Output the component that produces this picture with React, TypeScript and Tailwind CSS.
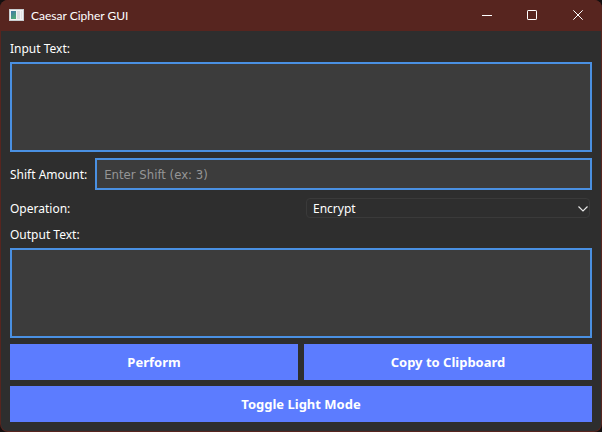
import React from "react";

const caption = "pt-0.5 leading-[14px]";
const field =
  "block w-full rounded-none border-2 border-[#4a90e2] bg-[#3c3c3c] font-['DejaVu_Sans_Condensed','DejaVu_Sans',sans-serif] text-[13px] text-white outline-none placeholder:text-[#969696] placeholder:opacity-100";
const action =
  "h-9 w-full bg-[#5c7cff] text-center font-['Noto_Sans',sans-serif] text-[13px] font-bold text-white hover:bg-[#4a6aef]";

function AppIcon() {
  return (
    <svg width="15" height="12" viewBox="0 0 15 12" aria-hidden="true" shapeRendering="crispEdges">
      <defs>
        <linearGradient id="screen" x1="0" y1="0" x2="0.5" y2="1">
          <stop offset="0" stopColor="#3f76a8" />
          <stop offset="1" stopColor="#4fa878" />
        </linearGradient>
      </defs>
      <rect width="15" height="12" fill="#c9cdd0" />
      <rect x="1" y="1" width="13" height="10" fill="#f2f2f2" />
      <rect x="2" y="2" width="5" height="8" fill="url(#screen)" />
      <rect x="8" y="2" width="3" height="8" fill="#dcdde0" />
      <rect x="12" y="2" width="1" height="8" fill="#e2e2e2" />
    </svg>
  );
}

function TitleBar() {
  const control = "flex h-full w-[46px] items-center justify-center hover:bg-white/10";
  return (
    <header className="flex h-[31px] items-center bg-[#57251f] pr-px pb-px pl-[9px] text-white">
      <AppIcon />
      <h1 className="ml-[7px] flex-1 pt-0.5 font-['Lato',sans-serif] text-[12px] leading-4">
        Caesar Cipher GUI
      </h1>
      <button type="button" aria-label="Minimize" className={control}>
        <svg width="12" height="10" viewBox="0 0 12 10" fill="none" stroke="currentColor">
          <path d="M2 5.5H12" />
        </svg>
      </button>
      <button type="button" aria-label="Maximize" className={control}>
        <svg width="10" height="10" viewBox="0 0 10 10" fill="none" stroke="currentColor">
          <rect x="0.5" y="0.5" width="9" height="9" rx="0.6" />
        </svg>
      </button>
      <button type="button" aria-label="Close" className={control}>
        <svg width="10" height="10" viewBox="0 0 10 10" fill="none" stroke="currentColor">
          <path d="M0.3 0.3L9.7 9.7M9.7 0.3L0.3 9.7" />
        </svg>
      </button>
    </header>
  );
}

export default function App() {
  return (
    <div className="flex min-h-screen bg-[#151010] font-['Noto_Sans',sans-serif] text-[12px] leading-4 text-white">
      <div className="flex flex-1 flex-col overflow-hidden rounded-lg bg-[#57251f]">
        <TitleBar />
        <main className="mx-px mb-px flex flex-1 flex-col gap-1.5 rounded-b-[7px] bg-[#2e2e2e] p-[9px]">
          <label htmlFor="input-text" className={caption}>
            Input Text:
          </label>
          <textarea id="input-text" className={`${field} flex-1 resize-none p-1`} />
          <div className="flex items-center gap-2">
            <label htmlFor="shift" className={`${caption} shrink-0`}>
              Shift Amount:
            </label>
            <input
              id="shift"
              type="text"
              placeholder="Enter Shift (ex: 3)"
              className={`${field} h-8 min-w-0 flex-1 px-[7px]`}
            />
          </div>
          <div className="grid h-6 grid-cols-2 items-center gap-1.5">
            <label htmlFor="operation" className={caption}>
              Operation:
            </label>
            <div className="relative mx-0.5">
              <select
                id="operation"
                className="block h-5 w-full appearance-none rounded border border-[#3a3a3a] bg-[#2e2e2e] pt-0.5 pl-1.5 text-white outline-none"
              >
                <option>Encrypt</option>
                <option>Decrypt</option>
              </select>
              <svg
                className="pointer-events-none absolute top-2 right-0.5"
                width="10"
                height="6"
                viewBox="0 0 10 6"
                fill="none"
                stroke="#e6e6e6"
                strokeWidth="1.2"
                aria-hidden="true"
              >
                <path d="M0.5 0.5L5 5L9.5 0.5" />
              </svg>
            </div>
          </div>
          <label htmlFor="output-text" className={caption}>
            Output Text:
          </label>
          <textarea id="output-text" readOnly className={`${field} flex-1 resize-none p-1`} />
          <div className="grid grid-cols-2 gap-1.5">
            <button type="button" className={action}>
              Perform
            </button>
            <button type="button" className={action}>
              Copy to Clipboard
            </button>
          </div>
          <button type="button" className={action}>
            Toggle Light Mode
          </button>
        </main>
      </div>
    </div>
  );
}
